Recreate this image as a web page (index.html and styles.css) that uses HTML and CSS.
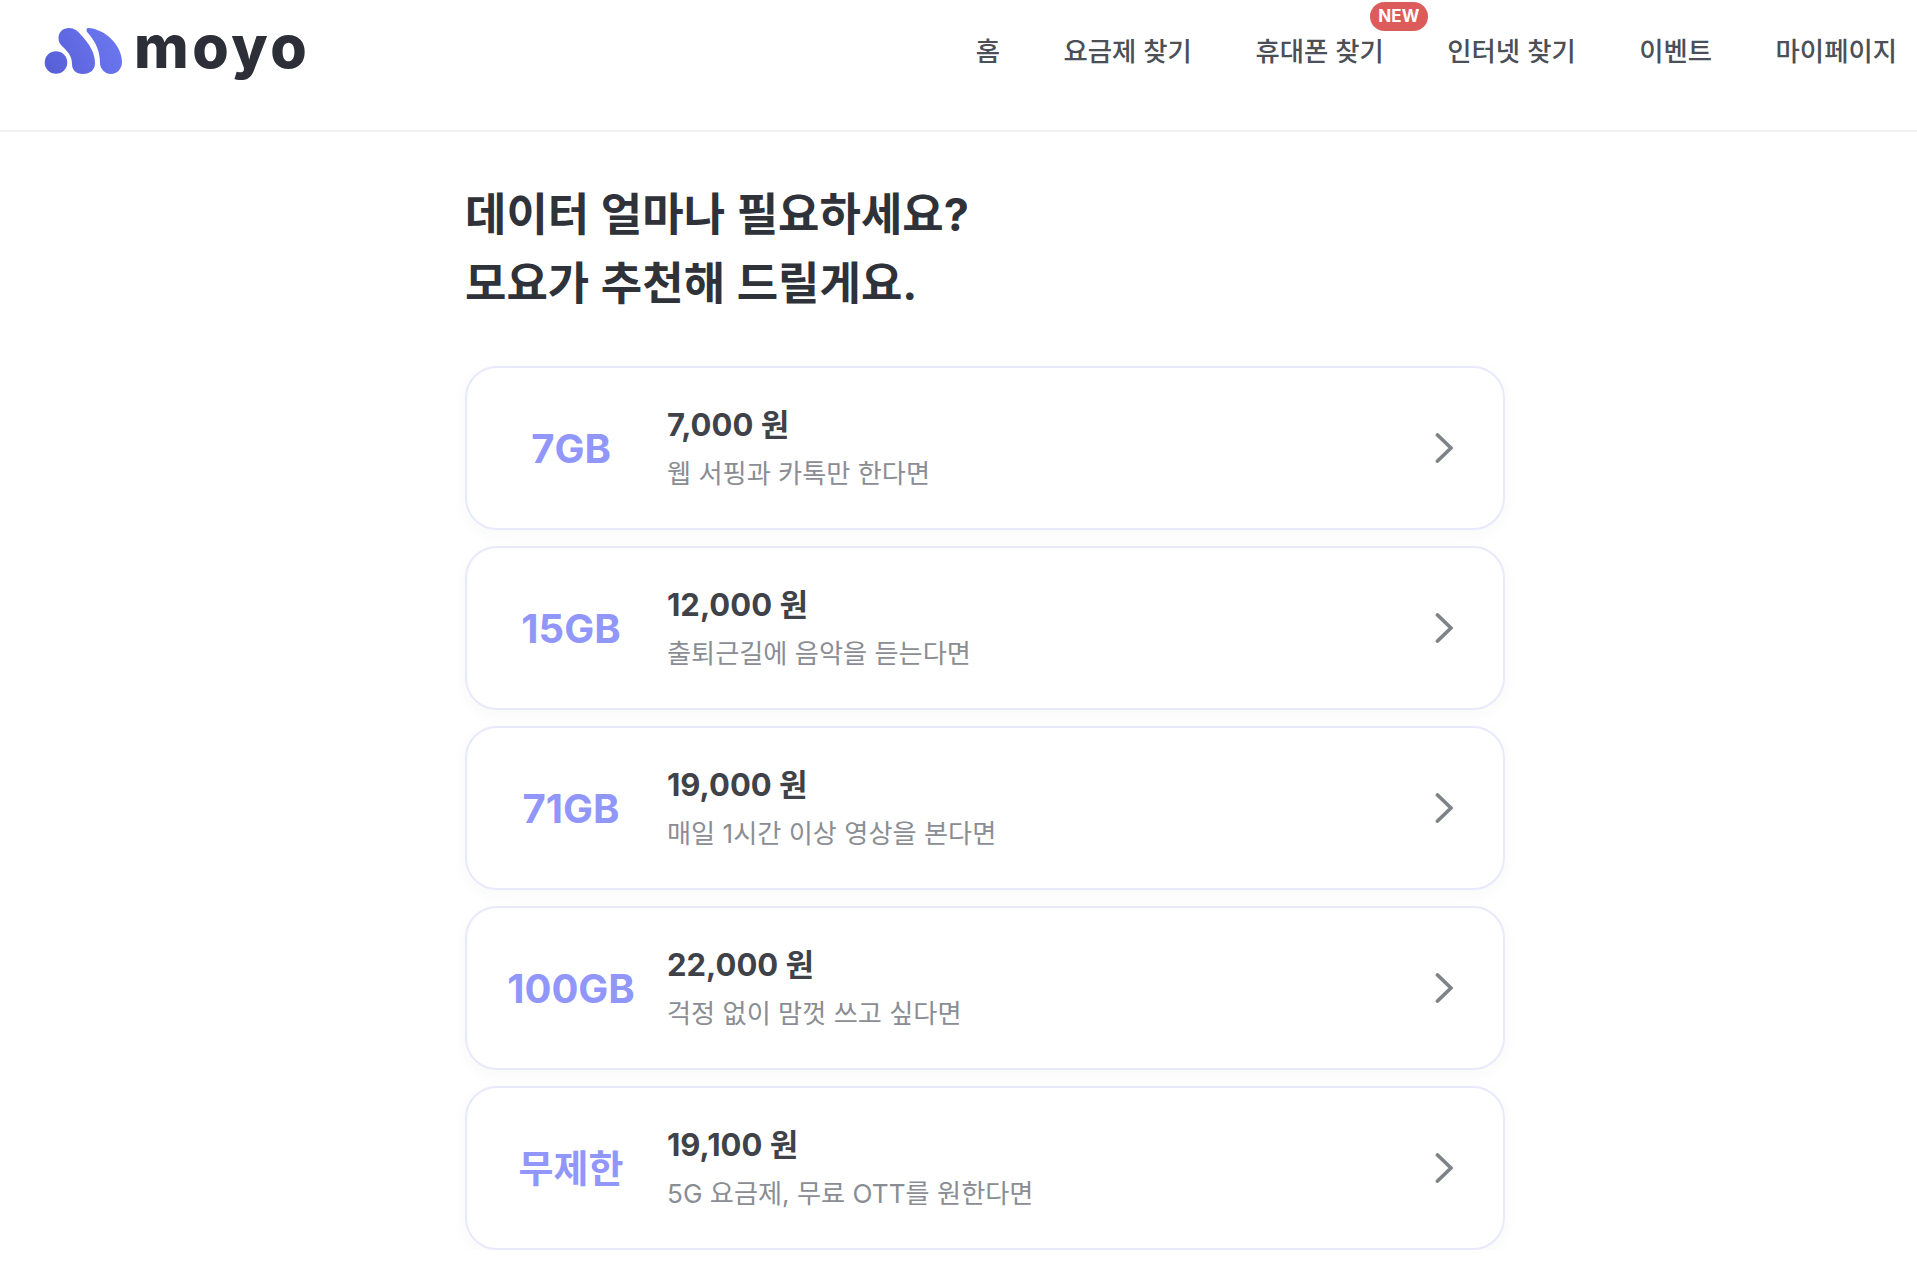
FILE: index.html
```html
<!DOCTYPE html>
<html lang="ko">
<head>
<meta charset="utf-8">
<title>moyo</title>
<link rel="stylesheet" href="styles.css">
</head>
<body>
<header class="header">
  <a class="logo" href="#">
    <svg class="logo-mark" viewBox="44 27 80 48" width="80" height="48" aria-hidden="true">
      <defs>
        <linearGradient id="lg" gradientUnits="userSpaceOnUse" x1="50" y1="70" x2="120" y2="35">
          <stop offset="0" stop-color="#5860d8"/>
          <stop offset="1" stop-color="#6d78f0"/>
        </linearGradient>
      </defs>
      <circle cx="56" cy="62.5" r="11.3" fill="url(#lg)"/>
      <path fill="url(#lg)" d="M58.5 38C58.5 32 63 28 69 28C74 28 78 31 81 35C90 44 95 54 95 63C95 70 90 74 83 74C76 74 72 70 72 64C72 56 68 52 63 47C60 44 58.5 42 58.5 38Z"/>
      <path fill="url(#lg)" d="M88 28C106 29 122 46 122 62C122 69 117 74 111 74C105 74 100 69 100 63C100 52 96 42 88 33C86 31 86 28 88 28Z"/>
    </svg>
    <span class="logo-text">moyo</span>
  </a>
  <nav class="nav">
    <a class="nav-item" href="#">홈</a>
    <a class="nav-item" href="#">요금제 찾기</a>
    <a class="nav-item" href="#">휴대폰 찾기<span class="badge">NEW</span></a>
    <a class="nav-item" href="#">인터넷 찾기</a>
    <a class="nav-item" href="#">이벤트</a>
    <a class="nav-item" href="#">마이페이지</a>
  </nav>
</header>
<main class="main">
  <h1 class="title">데이터 얼마나 필요하세요?<br>모요가 추천해 드릴게요.</h1>
  <ul class="list">
    <li><a class="card" href="#">
      <span class="amount">7GB</span>
      <span class="info"><strong class="price">7,000 원</strong><span class="desc">웹 서핑과 카톡만 한다면</span></span>
      <svg class="chev" viewBox="0 0 18 30" width="18" height="30" aria-hidden="true"><path d="M2.500 2L16 15L2.500 28"/></svg>
    </a></li>
    <li><a class="card" href="#">
      <span class="amount">15GB</span>
      <span class="info"><strong class="price">12,000 원</strong><span class="desc">출퇴근길에 음악을 듣는다면</span></span>
      <svg class="chev" viewBox="0 0 18 30" width="18" height="30" aria-hidden="true"><path d="M2.500 2L16 15L2.500 28"/></svg>
    </a></li>
    <li><a class="card" href="#">
      <span class="amount">71GB</span>
      <span class="info"><strong class="price">19,000 원</strong><span class="desc">매일 1시간 이상 영상을 본다면</span></span>
      <svg class="chev" viewBox="0 0 18 30" width="18" height="30" aria-hidden="true"><path d="M2.500 2L16 15L2.500 28"/></svg>
    </a></li>
    <li><a class="card" href="#">
      <span class="amount">100GB</span>
      <span class="info"><strong class="price">22,000 원</strong><span class="desc">걱정 없이 맘껏 쓰고 싶다면</span></span>
      <svg class="chev" viewBox="0 0 18 30" width="18" height="30" aria-hidden="true"><path d="M2.500 2L16 15L2.500 28"/></svg>
    </a></li>
    <li><a class="card" href="#">
      <span class="amount amount-ko">무제한</span>
      <span class="info"><strong class="price">19,100 원</strong><span class="desc">5G 요금제, 무료 OTT를 원한다면</span></span>
      <svg class="chev" viewBox="0 0 18 30" width="18" height="30" aria-hidden="true"><path d="M2.500 2L16 15L2.500 28"/></svg>
    </a></li>
  </ul>
</main>
</body>
</html>
```

FILE: styles.css
```css
* { box-sizing: border-box; }
html, body { margin: 0; padding: 0; background: #fff; }
body {
  font-family: Inter, "Noto Sans CJK KR", sans-serif;
  color: #33363d;
  overflow: hidden;
}
a { color: inherit; text-decoration: none; }
ul { list-style: none; margin: 0; padding: 0; }

.header {
  height: 132px;
  border-bottom: 2px solid #f1f2f4;
  display: flex;
  align-items: flex-start;
  justify-content: space-between;
  padding: 0 20px 0 44px;
}
.logo { display: flex; align-items: flex-start; gap: 10px; padding-top: 27px; }
.logo-mark { display: block; flex: none; }
.logo-text {
  font-family: Inter, sans-serif;
  font-weight: 800;
  font-size: 59px;
  line-height: 40px;
  letter-spacing: 3.5px;
  color: #2c2f37;
}
.nav { display: flex; gap: 63.5px; padding-top: 33px; }
.nav-item {
  position: relative;
  font-size: 26.4px;
  font-weight: 500;
  line-height: 36px;
  color: #4b4f58;
}
.badge {
  position: absolute;
  right: -44px;
  top: -31px;
  width: 58px;
  height: 29px;
  border-radius: 15px;
  background: #dc5c5b;
  color: #fff;
  font-size: 17px;
  font-weight: 700;
  line-height: 29px;
  text-align: center;
}

.main { padding: 48px 0 0 465px; width: 1505px; }
.title {
  margin: 0 0 48px;
  font-size: 45px;
  font-weight: 700;
  line-height: 69px;
  color: #2f3238;
  word-spacing: 1px;
}
.list { display: flex; flex-direction: column; gap: 16px; }
.card {
  height: 164px;
  display: flex;
  align-items: center;
  border: 2px solid #e8eafb;
  border-radius: 32px;
  background: #fff;
  box-shadow: 0 4px 16px rgba(40, 45, 80, 0.035);
  padding-right: 50px;
}
.amount {
  width: 200px;
  flex: none;
  padding-left: 8px;
  text-align: center;
  font-size: 40px;
  font-weight: 700;
  color: #9196fa;
}
.amount-ko { font-size: 38px; padding-bottom: 5px; }
.info { flex: 1; display: flex; flex-direction: column; gap: 9px; padding-bottom: 2px; }
.price {
  font-size: 31px;
  line-height: 44px;
  font-weight: 650;
  color: #3f4248;
}
.desc {
  font-size: 26.2px;
  line-height: 36px;
  color: #8a8d93;
}
.chev { flex: none; display: block; }
.chev path {
  fill: none;
  stroke: #7f8388;
  stroke-width: 3.8;
  stroke-linecap: round;
  stroke-linejoin: round;
}
```
